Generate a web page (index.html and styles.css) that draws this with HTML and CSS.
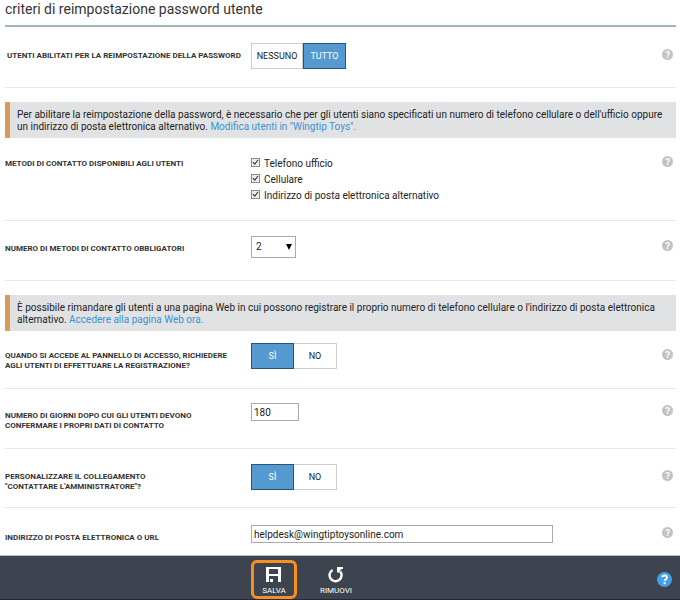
FILE: index.html
```html
<!DOCTYPE html>
<html lang="it">
<head>
<meta charset="utf-8">
<title>Criteri di reimpostazione password utente</title>
<link rel="stylesheet" href="styles.css">
</head>
<body>
<svg class="symbols">
  <symbol id="help" viewBox="0 0 16 16">
    <circle cx="8" cy="8" r="8" fill="currentColor"/>
    <path d="M5.4 5.4C6 3.2 10.6 3.1 10.6 5.9C10.6 7.7 8.1 7.7 8.1 9.7" fill="none" stroke="#fff" stroke-width="2"/>
    <rect x="7" y="10.8" width="2.2" height="2.2" fill="#fff"/>
  </symbol>
</svg>
<main class="page">
  <h1 class="title">criteri di reimpostazione password utente</h1>

  <section class="row row-first">
    <h2 class="label label-inset">UTENTI ABILITATI PER LA REIMPOSTAZIONE DELLA PASSWORD</h2>
    <div class="field">
      <div class="toggle">
        <button type="button" class="option option-wide">NESSUNO</button>
        <button type="button" class="option selected" aria-pressed="true">TUTTO</button>
      </div>
      <button type="button" class="help" aria-label="Guida"><svg><use href="#help"/></svg></button>
    </div>
  </section>

  <p class="notice">Per abilitare la reimpostazione della password, è necessario che per gli utenti siano specificati un numero di telefono cellulare o dell'ufficio oppure un indirizzo di posta elettronica alternativo. <a href="#utenti">Modifica utenti in "Wingtip Toys".</a></p>

  <section class="row row-methods">
    <h2 class="label">METODI DI CONTATTO DISPONIBILI AGLI UTENTI</h2>
    <div class="field field-top">
      <div class="checks">
        <label class="check"><input type="checkbox" checked>Telefono ufficio</label>
        <label class="check"><input type="checkbox" checked>Cellulare</label>
        <label class="check"><input type="checkbox" checked>Indirizzo di posta elettronica alternativo</label>
      </div>
      <button type="button" class="help" aria-label="Guida"><svg><use href="#help"/></svg></button>
    </div>
  </section>

  <section class="row row-count">
    <label class="label" for="count">NUMERO DI METODI DI CONTATTO OBBLIGATORI</label>
    <div class="field">
      <span class="select"><select id="count"><option>1</option><option selected>2</option></select></span>
      <button type="button" class="help" aria-label="Guida"><svg><use href="#help"/></svg></button>
    </div>
  </section>

  <p class="notice">È possibile rimandare gli utenti a una pagina Web in cui possono registrare il proprio numero di telefono cellulare o l'indirizzo di posta elettronica alternativo. <a href="#registrazione">Accedere alla pagina Web ora.</a></p>

  <section class="row row-register">
    <h2 class="label">QUANDO SI ACCEDE AL PANNELLO DI ACCESSO, RICHIEDERE<br>AGLI UTENTI DI EFFETTUARE LA REGISTRAZIONE?</h2>
    <div class="field">
      <div class="toggle">
        <button type="button" class="option selected" aria-pressed="true">SÌ</button>
        <button type="button" class="option">NO</button>
      </div>
      <button type="button" class="help" aria-label="Guida"><svg><use href="#help"/></svg></button>
    </div>
  </section>

  <section class="row row-days">
    <label class="label" for="days">NUMERO DI GIORNI DOPO CUI GLI UTENTI DEVONO<br>CONFERMARE I PROPRI DATI DI CONTATTO</label>
    <div class="field">
      <input class="text text-short" id="days" type="text" value="180">
      <button type="button" class="help" aria-label="Guida"><svg><use href="#help"/></svg></button>
    </div>
  </section>

  <section class="row row-link">
    <h2 class="label">PERSONALIZZARE IL COLLEGAMENTO<br>"CONTATTARE L'AMMINISTRATORE"?</h2>
    <div class="field">
      <div class="toggle">
        <button type="button" class="option selected" aria-pressed="true">SÌ</button>
        <button type="button" class="option">NO</button>
      </div>
      <button type="button" class="help" aria-label="Guida"><svg><use href="#help"/></svg></button>
    </div>
  </section>

  <section class="row row-url">
    <label class="label" for="url">INDIRIZZO DI POSTA ELETTRONICA O URL</label>
    <div class="field">
      <input class="text text-long" id="url" type="text" value="helpdesk@wingtiptoysonline.com">
      <button type="button" class="help" aria-label="Guida"><svg><use href="#help"/></svg></button>
    </div>
  </section>
</main>

<footer class="bar">
  <button type="button" class="command command-active">
    <svg viewBox="0 0 16 16"><path fill="#fff" fill-rule="evenodd" d="M0 0H15V15H12V9H3V15H0ZM3 2V7H12V2ZM4 12H7V15H4Z"/></svg>
    <span>SALVA</span>
  </button>
  <button type="button" class="command">
    <svg viewBox="0 0 16 16"><path d="M4.6 3A6 6 0 1 0 12.2 4.4" fill="none" stroke="#fff" stroke-width="2.4"/><path fill="#fff" d="M9 0H15V2H13.5L10.5 6L9 5Z"/></svg>
    <span>RIMUOVI</span>
  </button>
  <button type="button" class="help help-main" aria-label="Guida"><svg><use href="#help"/></svg></button>
</footer>
</body>
</html>
```
FILE: styles.css
```css
* { box-sizing: border-box; }

body {
  margin: 0;
  display: flex;
  flex-direction: column;
  min-height: 100vh;
  background: #fff;
  color: #222;
  font: 10px/12px Roboto, "Open Sans", sans-serif;
}

button, input, select { font: inherit; color: inherit; margin: 0; }

.symbols { display: none; }

.page { flex: 1; padding: 0 4px 0 5px; }

.title {
  margin: 0;
  height: 27px;
  border-bottom: 2px solid #9fb6c0;
  font-size: 14px;
  font-weight: 400;
  line-height: 18px;
  color: #333;
}

.row {
  display: grid;
  grid-template-columns: 246px 1fr;
  align-items: start;
  border-bottom: 1px solid #e6e6e6;
}

.row-first { height: 61px; padding-top: 16px; margin-bottom: 14px; }
.row-methods { height: 83px; padding-top: 13px; }
.row-count { height: 60px; padding-top: 15px; margin-bottom: 14px; }
.row-register { height: 58px; padding-top: 12px; }
.row-days { height: 60px; padding-top: 14px; }
.row-link { height: 59px; padding-top: 15px; }
.row-url { height: 47px; padding-top: 17px; border-bottom: 0; }

.label {
  margin: 0;
  padding-top: 8px;
  font-size: 8px;
  font-weight: 700;
  line-height: 10px;
  color: #333;
  white-space: nowrap;
}

.label-inset { padding-left: 2px; }

.field {
  display: flex;
  align-items: center;
  justify-content: space-between;
  padding-right: 3px;
}

.field-top { align-items: flex-start; padding-top: 5px; }

.help {
  width: 11px;
  height: 11px;
  padding: 0;
  border: 0;
  background: none;
  color: #c3c3c3;
}

.field .help { margin-bottom: 4px; }

.help svg { display: block; width: 100%; height: 100%; }

.toggle { display: flex; }

.option {
  width: 43px;
  height: 26px;
  padding: 0;
  border: 1px solid #ccc;
  background: #fff;
  font-size: 9px;
}

.option-wide { width: 52px; }
.option + .option { border-left-width: 0; }
.option.selected { border: 1px solid #285577; background: #5499d0; color: #fff; }

.notice {
  margin: 0;
  padding: 7px 12px 5px 7px;
  border-left: 5px solid #d99c58;
  background: #e1e2e4;
}

.notice a { color: #3b93d3; text-decoration: none; }

.check { display: flex; align-items: center; gap: 4px; height: 16px; }

.check input {
  appearance: none;
  width: 9px;
  height: 9px;
  margin-bottom: 3px;
  border: 1px solid #8a8a8a;
  background: #eee;
}

.check input:checked {
  background: #eee url("data:image/svg+xml,%3Csvg xmlns='http://www.w3.org/2000/svg' viewBox='0 0 7 7'%3E%3Cpath d='M1 3.2L2.8 5.2L6 1' fill='none' stroke='%23333' stroke-width='1.1'/%3E%3C/svg%3E");
}

.select { position: relative; }

.select select {
  appearance: none;
  display: block;
  width: 45px;
  height: 22px;
  padding: 0 4px;
  border: 1px solid #aaa;
  border-radius: 0;
  background: #fff;
}

.select::after {
  content: "";
  position: absolute;
  right: 4px;
  top: 8px;
  border: 3px solid transparent;
  border-top: 6px solid #000;
  border-bottom: 0;
  pointer-events: none;
}

.text {
  height: 18px;
  padding: 0 2px;
  border: 1px solid #aaa;
  background: #fff;
}

.text-short { width: 48px; }
.text-long { width: 302px; }

.bar {
  display: flex;
  align-items: center;
  gap: 15px;
  height: 45px;
  padding: 3px 8px 0 251px;
  border-top: 1px solid #b8bbbf;
  border-bottom: 1px solid #242832;
  background: #3d444f;
}

.command {
  display: flex;
  flex-direction: column;
  align-items: center;
  gap: 2px;
  width: 48px;
  height: 39px;
  padding: 4px 0 0;
  border: 3px solid transparent;
  border-radius: 6px;
  background: none;
  color: #fff;
  font-size: 8px;
}

.command-active { width: 46px; border-color: #f7901e; }
.command svg { width: 16px; height: 16px; flex: none; }

.help-main { width: 15px; height: 15px; margin-left: auto; color: #459eea; }
```
